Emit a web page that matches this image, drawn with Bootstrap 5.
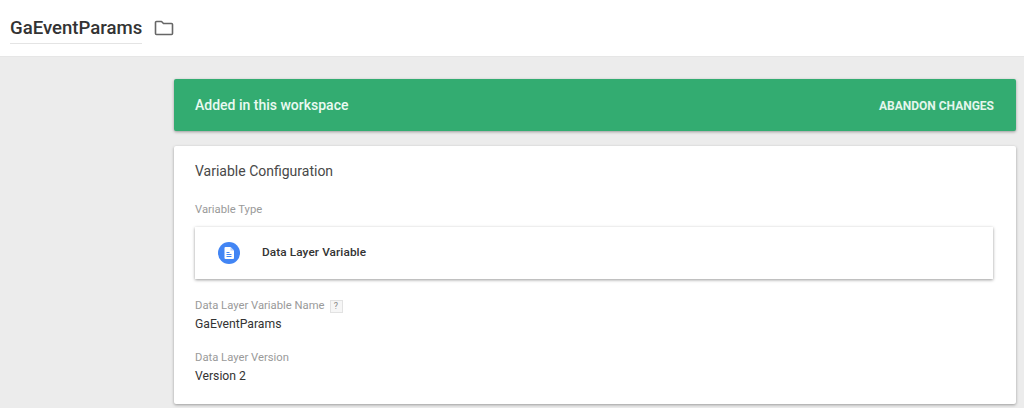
<!DOCTYPE html>
<html lang="en">
<head>
<meta charset="utf-8">
<title>GaEventParams</title>
<link href="https://cdn.jsdelivr.net/npm/bootstrap@5.3.0/dist/css/bootstrap.min.css" rel="stylesheet">
<style>
html, body { height: 100%; }
body { font-family: Roboto, "Liberation Sans", sans-serif; background: #ececec; overflow: hidden; color: #212121; }
.top-bar { height: 57px; background: #fff; padding-left: 10px; border-bottom: 1px solid #e6e6e6; }
.title-text { font-size: 18.6px; line-height: 24px; font-weight: 500; color: #333; border-bottom: 1px solid #e4e4e4; padding: 4px 0 3px; margin-top: -1px; }
.folder-ico { margin-left: 12px; margin-top: -1px; }
.page-main { margin-left: 174px; width: 842px; padding-top: 22px; }
.status-bar { height: 52px; background: #33ac71; color: #fff; border-radius: 2px; box-shadow: 0 1px 3px rgba(0,0,0,.35); padding: 0 22px 0 21px; }
.status-text { font-size: 14px; font-weight: 500; color: #eafaf1; }
.status-action { font-size: 12px; font-weight: 700; color: #e4f6ec; padding-top: 1px; }
.config-box { background: #fff; margin-top: 15px; height: 258px; border-radius: 2px; box-shadow: 0 1px 3px rgba(0,0,0,.35); padding: 16px 23px 0 21px; }
.config-title { font-size: 14px; line-height: 18px; color: #484848; }
.field-label { font-size: 11.25px; line-height: 14px; color: #9a9a9a; }
.type-label { margin-top: 23px; }
.type-box { height: 52px; margin-top: 10px; background: #fff; box-shadow: 0 1px 3px rgba(0,0,0,.4); padding-left: 23px; }
.type-name { font-size: 11.8px; font-weight: 500; color: #333; margin-left: 22px; letter-spacing: .1px; }
.name-label { margin-top: 20px; }
.help-mark { width: 13px; height: 13px; font-size: 9px; line-height: 11px; border: 1px solid #e2e2e2; background: #f6f6f6; color: #888; text-align: center; margin-left: 5px; }
.field-value { font-size: 12.2px; line-height: 14px; color: #333; margin-top: 4px; }
.version-label { margin-top: 20px; }
.version-value { margin-top: 4px; }
</style>
</head>
<body>
<header class="top-bar d-flex align-items-center">
  <div class="title-text">GaEventParams</div>
  <svg class="folder-ico" width="20" height="16" viewBox="0 0 20 16" aria-hidden="true"><path d="M2.5 1.5h5l2 2h8a1 1 0 0 1 1 1v9a1 1 0 0 1-1 1h-15a1 1 0 0 1-1-1v-11a1 1 0 0 1 1-1z" fill="none" stroke="#666" stroke-width="1.6" stroke-linejoin="round"/></svg>
</header>
<main class="page-main">
  <div class="status-bar d-flex align-items-center justify-content-between">
    <span class="status-text">Added in this workspace</span>
    <span class="status-action">ABANDON CHANGES</span>
  </div>
  <section class="config-box">
    <div class="config-title">Variable Configuration</div>
    <div class="field-label type-label">Variable Type</div>
    <div class="type-box d-flex align-items-center">
      <svg width="22" height="22" viewBox="0 0 22 22" aria-hidden="true"><circle cx="11" cy="11" r="11" fill="#4285f4"/><path d="M7.5 5h5L16 8.5V16a1 1 0 0 1-1 1H7.500a1 1 0 0 1-1-1V6a1 1 0 0 1 1-1z" fill="#fff"/><path d="M12.500 5v3.500H16z" fill="#b9d0fb"/><path d="M8.500 10.500h3M8.500 12.500h5M8.500 14.500h5" stroke="#4285f4" stroke-width="1"/></svg>
      <span class="type-name">Data Layer Variable</span>
    </div>
    <div class="field-label name-label d-flex align-items-center">Data Layer Variable Name<span class="help-mark">?</span></div>
    <div class="field-value">GaEventParams</div>
    <div class="field-label version-label">Data Layer Version</div>
    <div class="field-value version-value">Version 2</div>
  </section>
</main>
<script src="https://cdn.jsdelivr.net/npm/bootstrap@5.3.0/dist/js/bootstrap.bundle.min.js"></script>
</body>
</html>
